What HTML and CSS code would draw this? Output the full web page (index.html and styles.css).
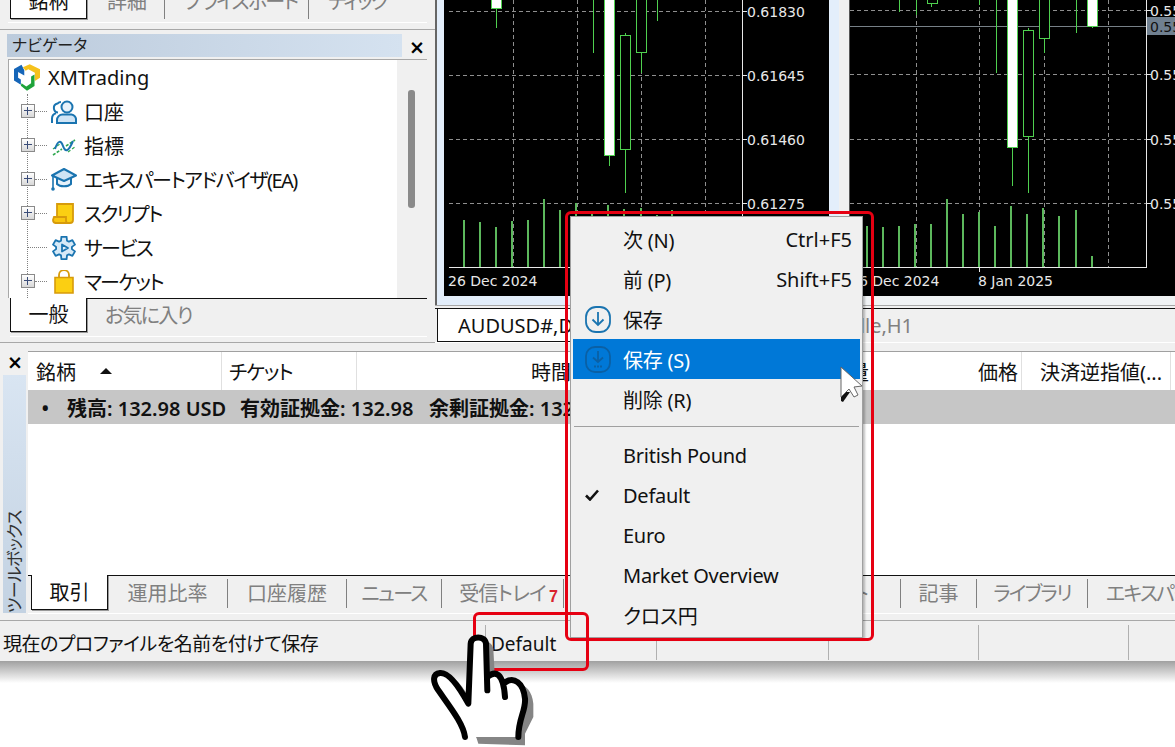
FILE: index.html
```html
<!DOCTYPE html>
<html lang="ja">
<head>
    <meta charset="UTF-8">
    <title>MetaTrader 5 - プロファイル</title>
    <link rel="stylesheet" href="styles.css">
</head>
<body>
    <div class="app">
        <div class="top">
            <!-- left column: market watch tabs + navigator -->
            <aside class="left-panel">
                <div class="watch-tabs">
                    <div class="watch-tab active">銘柄</div>
                    <div class="watch-tab details">詳細</div>
                    <div class="watch-tab board kana">プライスボード</div>
                    <div class="watch-tab ticks kana">ティック</div>
                </div>
                <div class="navigator">
                    <div class="nav-head">
                        <div class="nav-title">ナビゲータ</div>
                        <div class="close">×</div>
                    </div>
                    <div class="nav-body">
                        <div class="tree">
                            <div class="tree-root">
                                <svg class="logo" viewBox="0 0 76 78">
                                    <path d="M22 2 0 14V48L20 60V45L12 40V23L30 33V18z" fill="#1565b8"/>
                                    <path d="M26 9 46 0 76 15V40L61 49V25L42 15 34 19z" fill="#f6c21c"/>
                                    <path d="M20 63 38 78 60 64V30L50 36V56L36 65 22 56z" fill="#1ea33a"/>
                                </svg>
                                <span>XMTrading</span>
                            </div>
                            <ul class="tree-list">
                                <li class="tree-row">
                                    <i class="expander"></i><i class="dots"></i>
                                    <svg class="tree-icon" viewBox="0 0 26 24">
                                        <path d="M7 12.500A4.500 4.500 0 0 1 6.500 3.600 5 5 0 0 1 10 2M1 23v-4.500A5.500 5.500 0 0 1 5 13.300" fill="none" stroke="#1a74b0" stroke-width="2"/>
                                        <circle cx="16" cy="7" r="5.500" fill="#e6f1fa" stroke="#1a74b0" stroke-width="2"/>
                                        <path d="M6 23v-3a5.500 5.500 0 0 1 5.500-5.500h9A5 5 0 0 1 25 20v3z" fill="#cfe4f5" stroke="#1a74b0" stroke-width="2"/>
                                    </svg>
                                    <span>口座</span>
                                </li>
                                <li class="tree-row">
                                    <i class="expander"></i><i class="dots"></i>
                                    <svg class="tree-icon" viewBox="0 0 26 24">
                                        <path d="M2 21 11 15M15 12 24 6" fill="none" stroke="#2fa84f" stroke-width="1.600" stroke-dasharray="3 1.500"/>
                                        <path d="M2 15 9 10M17 18l7-5" fill="none" stroke="#2fa84f" stroke-width="1.200" stroke-dasharray="3 2"/>
                                        <path d="M4 15C7 6 10 6 12 12S17 19 22 7" fill="none" stroke="#1a74b0" stroke-width="2"/>
                                    </svg>
                                    <span>指標</span>
                                </li>
                                <li class="tree-row">
                                    <i class="expander"></i><i class="dots"></i>
                                    <svg class="tree-icon" viewBox="0 0 26 24">
                                        <path d="M6 9v7c3 3 11 3 14 0V9" fill="#e6f1fa" stroke="#1a74b0" stroke-width="2"/>
                                        <path d="M13 1 25 7.500 13 13 1 7.500z" fill="#cfe4f5" stroke="#1a74b0" stroke-width="2" stroke-linejoin="round"/>
                                        <path d="M2 8v12" stroke="#1a74b0" stroke-width="1.600"/>
                                        <circle cx="2" cy="21" r="1.800" fill="#1a74b0"/>
                                    </svg>
                                    <span class="kana-long">エキスパートアドバイザ(EA)</span>
                                </li>
                                <li class="tree-row">
                                    <i class="expander"></i><i class="dots"></i>
                                    <svg class="tree-icon" viewBox="0 0 26 24">
                                        <path d="M6 16V2h16v16c0 2-1 3-3 3H5z" fill="#fbcf12" stroke="#d79b0b" stroke-width="1.800"/>
                                        <path d="M3 15h12v3.500c0 1.500 1 2.500 2 2.500H5c-2 0-3-1-3-3z" fill="#f9c60f" stroke="#d79b0b" stroke-width="1.800"/>
                                    </svg>
                                    <span class="kana">スクリプト</span>
                                </li>
                                <li class="tree-row leaf">
                                    <i class="dots"></i>
                                    <svg class="tree-icon" viewBox="0 0 24 24">
                                        <path d="M9 4.600 9.400.8h5.200L15 4.600 16.900 5.700 20.400 4.200 23 8.600 19.900 10.900V13.100L23 15.400 20.400 19.800 16.900 18.300 15 19.400 14.600 23.200H9.400L9 19.400 7.100 18.300 3.600 19.800 1 15.400 4.100 13.100V10.900L1 8.600 3.600 4.200 7.100 5.700z" fill="#d6e9f7" stroke="#1a74b0" stroke-width="1.800" stroke-linejoin="round"/>
                                        <path d="M10 8.500 16 12 10 15.500z" fill="#e6f1fa" stroke="#1a74b0" stroke-width="1.800" stroke-linejoin="round"/>
                                    </svg>
                                    <span class="kana">サービス</span>
                                </li>
                                <li class="tree-row">
                                    <i class="expander"></i><i class="dots"></i>
                                    <svg class="tree-icon" viewBox="0 0 26 24">
                                        <path d="M8 8V5a5 5 0 0 1 10 0v3" fill="none" stroke="#d79b0b" stroke-width="1.800"/>
                                        <path d="M4 7.500h18v15.500H4z" fill="#fbcf12" stroke="#d79b0b" stroke-width="1.600"/>
                                    </svg>
                                    <span class="kana">マーケット</span>
                                </li>
                            </ul>
                        </div>
                        <div class="tree-scroll"><div class="thumb"></div></div>
                    </div>
                    <div class="nav-tabs">
                        <div class="watch-tab active">一般</div>
                        <div class="watch-tab kana">お気に入り</div>
                    </div>
                </div>
            </aside>

            <section class="workspace">
                <div class="charts">
                    <div class="chart-frame current">
                        <svg class="chart" width="385" height="296" viewBox="444 0 385 296">
                            <!-- grid -->
                            <path class="grid" d="M449 11.500H742M449 75.500H742M449 139.500H742M449 203.500H742M513.500 0V267M577.500 0V267M641.500 0V267M705.500 0V267"/>
                            <path class="axis" d="M448.500 267.500H742.500V0M742 11.500h5M742 75.500h5M742 139.500h5M742 203.500h5"/>
                            <!-- volume -->
                            <path class="vol" d="M464 267V220M480 267V222M496 267V227M512 267V221M528 267V220M544 267V199M560 267V210M576 267V203M592 267V212M608 267V205M624 267V209M641 267V208M657 267V215M672 267V210"/>
                            <!-- candles -->
                            <path class="wick" d="M496.500 8V28M593.500 0V53M609.500 155V166M625.500 33V193M641.500 52V73M657.500 0V21"/>
                            <rect class="up" x="491.500" y="-5" width="10" height="13.500"/>
                            <rect class="up" x="604.500" y="-5" width="10" height="160.500"/>
                            <rect class="down" x="620.500" y="35.500" width="10" height="114"/>
                            <rect class="down" x="636.500" y="-5" width="10" height="57.500"/>
                            <text class="price" x="747" y="17">0.61830</text>
                            <text class="price" x="747" y="81">0.61645</text>
                            <text class="price" x="747" y="145">0.61460</text>
                            <text class="price" x="747" y="209">0.61275</text>
                            <text class="price" x="448" y="286">26 Dec 2024</text>
                        </svg>
                    </div>
                    <div class="chart-frame other">
                        <svg class="chart" width="325" height="296" viewBox="850 0 325 296">
                            <path class="grid" d="M850 10.500H1146M850 74.500H1146M850 139.500H1146M850 203.500H1146M916.500 0V267M979.500 0V267M1044.500 0V267M1108.500 0V267"/>
                            <path class="level" d="M850 26.500H1146"/>
                            <path class="axis" d="M850 267.500H1146.500V0M1146 10.500h5M1146 74.500h5M1146 139.500h5M1146 203.500h5M979.500 267v5"/>
                            <path class="vol" d="M867 267V226M883 267V227M899 267V226M915 267V224M931 267V224M947 267V199M963 267V214M979 267V212M995 267V226M1011 267V206M1027 267V214M1043 267V208M1059 267V216M1076 267V210M1092 267V256"/>
                            <path class="wick" d="M899.500 0V12M916.500 0V15M931.500 3V7M979.500 0V5M996.500 0V73M1012.500 147V186M1028.500 28V193M1044.500 38V53M1076.500 0V33M1092.500 26V28"/>
                            <rect class="down" x="927.500" y="-5" width="10" height="8.500"/>
                            <rect class="up" x="1007.500" y="-5" width="10" height="152.500"/>
                            <rect class="down" x="1023.500" y="30.500" width="10" height="106"/>
                            <rect class="down" x="1039.500" y="-5" width="10" height="43.500"/>
                            <rect class="up" x="1087.500" y="-5" width="10" height="31.500"/>
                            <rect class="level-tag" x="1147" y="17" width="28" height="18"/>
                            <text class="price" x="1150" y="16">0.55</text>
                            <text class="level-text" x="1150" y="32">0.55</text>
                            <text class="price" x="1150" y="80">0.55</text>
                            <text class="price" x="1150" y="145">0.55</text>
                            <text class="price" x="1150" y="209">0.55</text>
                            <text class="price" x="850" y="286">26 Dec 2024</text>
                            <text class="price" x="978" y="286">8 Jan 2025</text>
                        </svg>
                    </div>
                </div>
                <div class="chart-tabs">
                    <div class="chart-tab active">AUDUSD#,Daily</div>
                    <div class="chart-tab">AUDUSD#,Candle,H1</div>
                </div>
            </section>
        </div>

        <section class="toolbox">
            <div class="toolbox-side">
                <div class="close">×</div>
                <div class="side-title">ツールボックス</div>
            </div>
            <div class="toolbox-main">
                <div class="table-head">
                    <div class="col first">銘柄<i class="sort"></i></div>
                    <div class="col"><span class="ticket">チケット</span></div>
                    <div class="col right">時間</div>
                    <div class="col right">タイプ</div>
                    <div class="col right">取引量</div>
                    <div class="col right">価格</div>
                    <div class="col stop">決済逆指値(...</div>
                    <div class="col"></div>
                </div>
                <div class="balance-row">
                    <span class="bullet">•</span>
                    <span class="bal-a">残高: 132.98 USD</span>
                    <span class="bal-b">有効証拠金: 132.98</span>
                    <span>余剰証拠金: 132.98</span>
                </div>
                <div class="table-empty"></div>
                <div class="toolbox-tabs">
                    <div class="tool-tab active">取引</div>
                    <div class="tool-tab w-ratio">運用比率</div>
                    <div class="tool-tab w-history">口座履歴</div>
                    <div class="tool-tab w-news kana">ニュース</div>
                    <div class="tool-tab w-mail">受信トレイ</div>
                    <div class="tool-tab w-cal kana">カレンダー</div>
                    <div class="tool-tab w-alert kana">アラート</div>
                    <div class="tool-tab w-article">記事</div>
                    <div class="tool-tab w-lib kana">ライブラリ</div>
                    <div class="tool-tab w-expert kana">エキスパート</div>
                </div>
            </div>
        </section>

        <footer class="status">
            <div class="cell cell-msg">現在のプロファイルを名前を付けて保存</div>
            <div class="cell cell-a">Default</div>
            <div class="cell cell-b"></div>
            <div class="cell cell-c"></div>
            <div class="cell cell-d"></div>
            <div class="cell"></div>
        </footer>
    </div>
    <div class="window-shadow"></div>

    <!-- context menu -->
    <div class="menu">
        <div class="menu-item"><span class="menu-icon"></span><span class="menu-label">次 (N)</span><span class="shortcut">Ctrl+F5</span></div>
        <div class="menu-item"><span class="menu-icon"></span><span class="menu-label">前 (P)</span><span class="shortcut">Shift+F5</span></div>
        <div class="menu-item">
            <span class="menu-icon">
                <svg width="26" height="27" viewBox="0 0 26 27"><rect x="1" y="1" width="24" height="25" rx="10" fill="none" stroke="#1a74b0" stroke-width="1.800"/><path d="M13 6v13M7.500 13.500 13 19l5.500-5.500" fill="none" stroke="#1a74b0" stroke-width="1.800"/></svg>
            </span>
            <span class="menu-label">保存</span>
        </div>
        <div class="menu-item selected">
            <span class="menu-icon">
                <svg width="26" height="27" viewBox="0 0 26 27"><rect x="1" y="1" width="24" height="25" rx="9" fill="none" stroke="#0a60a5" stroke-width="1.800"/><path d="M13 5v11M8 11.500 13 16l5-4.500" fill="none" stroke="#0a60a5" stroke-width="1.800"/><path d="M9 20.500h8" fill="none" stroke="#0a60a5" stroke-width="1.800" stroke-dasharray="2 1"/></svg>
            </span>
            <span class="menu-label">保存 (S)</span>
        </div>
        <div class="menu-item"><span class="menu-icon"></span><span class="menu-label">削除 (R)</span></div>
        <div class="menu-sep"></div>
        <div class="menu-item"><span class="menu-icon"></span><span class="menu-label">British Pound</span></div>
        <div class="menu-item">
            <span class="menu-icon">
                <svg width="14" height="12" viewBox="0 0 14 12"><path d="M1 6.500 5 10.500 13 1.500" fill="none" stroke="#111" stroke-width="2.600"/></svg>
            </span>
            <span class="menu-label">Default</span>
        </div>
        <div class="menu-item"><span class="menu-icon"></span><span class="menu-label">Euro</span></div>
        <div class="menu-item"><span class="menu-icon"></span><span class="menu-label">Market Overview</span></div>
        <div class="menu-item"><span class="menu-icon"></span><span class="menu-label kana">クロス円</span></div>
    </div>

    <!-- annotations drawn on top of the screenshot -->
    <div class="mark mark-menu"></div>
    <div class="mark mark-profile"></div>
    <div class="mark-num">7</div>

    <svg class="arrow-cursor" width="24" height="38" viewBox="0 0 24 38">
        <path d="M1 26H10L3 36 1 35z" fill="#111"/>
        <path d="M1 1V31L9 23 14 31 18 29 14 21 22 20z" fill="#fff" stroke="#666" stroke-width="1"/>
    </svg>

    <svg class="hand-cursor" width="110" height="125" viewBox="90 170 330 375">
        <path class="hand-shadow" d="M235 520C225 480 190 440 150 390 120 350 115 325 140 320 165 315 190 350 225 410L230 235C232 205 275 205 280 235L285 330C310 315 335 325 340 350 365 335 395 350 400 400V440L375 490V525z"/>
        <path class="hand-fill" d="M215 500C205 460 170 420 130 370 100 330 95 305 120 300 145 295 170 330 205 395L210 220C212 190 255 190 260 220L265 320C290 300 315 310 320 335 345 315 375 335 380 385 385 420 355 450 355 500z"/>
        <path class="hand-line" d="M195 500C190 460 150 410 115 360 95 330 100 310 120 308 145 305 175 345 205 400L212 220C214 195 255 195 258 220L262 360M262 320C285 300 310 305 315 380M318 335C340 320 370 335 375 385 378 420 355 445 355 500"/>
    </svg>
</body>
</html>
```
FILE: styles.css
```css
html, body {
    margin: 0;
    padding: 0;
}

body {
    position: relative;
    width: 1175px;
    height: 747px;
    overflow: hidden;
    background: #fff;
    color: #111;
    font-family: 'Noto Sans', 'Noto Sans CJK JP', sans-serif;
    font-size: 20px;
    font-feature-settings: "palt";
}

ul {
    list-style: none;
    margin: 0;
    padding: 0;
}

i {
    display: block;
}

/* Yu Gothic UI kana run much narrower than Noto */
.kana {
    letter-spacing: -1.700px;
}

.kana-long {
    letter-spacing: -1.500px;
}

.app {
    height: 661px;
    background: #f0f0f0;
    display: grid;
    grid-template-rows: 345px 275px 41px;
    overflow: hidden;
}

.window-shadow {
    height: 22px;
    background: linear-gradient(#a0a0a0, #fff);
}

.top {
    display: grid;
    grid-template-columns: 435px 740px;
    min-height: 0;
}

/* left column */
.left-panel {
    border-bottom: 1px solid #a8a8a8;
    height: 343px;
    box-sizing: border-box;
    overflow: hidden;
}

.watch-tabs {
    display: flex;
    height: 23px;
    margin: 0 8px;
    border-bottom: 1px solid #fff;
    padding-left: 2px;
    box-sizing: border-box;
    overflow: hidden;
}

.watch-tab {
    height: 34px;
    line-height: 34px;
    padding: 0 18px;
    color: #808080;
    white-space: nowrap;
    box-sizing: border-box;
}

.watch-tabs .watch-tab {
    margin-top: -15px;
    border-right: 1px solid #808080;
}

.watch-tabs .active {
    border: 1px solid #111;
    border-top: 0;
    box-shadow: 1px 1px 0 #999;
}

.watch-tab.active {
    width: 77px;
    padding: 0;
    background: #fff;
    color: #111;
    text-align: center;
}

.watch-tab.details {
    width: 78px;
    padding-left: 20px;
}

.watch-tab.board {
    width: 144px;
    padding-left: 19px;
}

.watch-tabs .ticks {
    border-right: 0;
    padding-left: 19px;
}

.navigator {
    margin-top: 6px;
    border-top: 1px solid #a8a8a8;
    padding: 4px 8px 0 7px;
}

.nav-head {
    display: flex;
    height: 23px;
    margin-bottom: 2px;
}

.nav-title {
    flex: none;
    width: 395px;
    padding-left: 5px;
    box-sizing: border-box;
    background: linear-gradient(90deg, #bccbdc, #d5e2f0);
    font-size: 16px;
    line-height: 22px;
    color: #222;
}

.close {
    flex: none;
    font-family: 'DejaVu Sans', sans-serif;
    font-weight: bold;
    font-size: 19px;
    line-height: 26px;
    text-align: center;
    width: 30px;
    color: #000;
}

.nav-body {
    display: flex;
    height: 238px;
    margin-left: 1px;
    border-top: 1px solid #a8a8a8;
    border-left: 1px solid #a8a8a8;
    overflow: hidden;
}

.tree {
    width: 388px;
    background: #fff;
}

.tree-root {
    display: flex;
    align-items: center;
    gap: 8px;
    height: 34px;
    padding-left: 5px;
}

.logo {
    width: 26px;
    height: 27px;
}

.tree-list {
    margin-left: 18px;
    border-left: 1px dotted #808080;
    padding-bottom: 10px;
}

.tree-row {
    display: flex;
    align-items: center;
    height: 34px;
}

.expander {
    position: relative;
    width: 14px;
    height: 14px;
    margin-left: -7px;
    box-sizing: border-box;
    border: 1px solid #8a8a8a;
    background: linear-gradient(#fff, #d8d8d8);
    flex: none;
}

.expander::before,
.expander::after {
    content: "";
    position: absolute;
    background: #3a4c78;
}

.expander::before {
    left: 2px;
    right: 2px;
    top: 5px;
    height: 1px;
}

.expander::after {
    top: 2px;
    bottom: 2px;
    left: 5px;
    width: 1px;
}

.dots {
    width: 12px;
    border-top: 1px dotted #808080;
    flex: none;
}

.leaf .dots {
    width: 19px;
}

.tree-icon {
    width: 26px;
    height: 24px;
    margin: 2px 7px 0 4px;
    flex: none;
}

.tree-scroll {
    flex: 1;
    padding: 30px 0 0 11px;
}

.thumb {
    width: 7px;
    height: 118px;
    border-radius: 3px;
    background: #8a8a8a;
}

.nav-tabs {
    display: flex;
    height: 39px;
    margin-left: 3px;
    border-bottom: 1px solid #fff;
    box-sizing: border-box;
    width: 417px;
}

.nav-tabs .watch-tab {
    flex: 1;
    border-top: 1px solid #111;
    padding-left: 18px;
}

.nav-tabs .active {
    flex: none;
    padding: 0;
    border: 1px solid #111;
    border-top: 0;
    box-shadow: 1px 1px 0 #999;
}

/* charts */
.workspace {
    display: flex;
    flex-direction: column;
    overflow: hidden;
    height: 343px;
}

.charts {
    display: flex;
    height: 306px;
    border-bottom: 1px solid #a8a8a8;
    box-sizing: border-box;
    flex: none;
}

.chart-frame {
    overflow: hidden;
}

.current {
    flex: none;
    width: 404px;
    padding: 0 10px 9px 7px;
    border-left: 2px solid #666;
    box-sizing: border-box;
    background: #e3eefb;
}

.other {
    margin-left: 10px;
    border-left: 1px solid #555;
    flex: 1;
    background: #f0f2f4;
}

.chart {
    display: block;
    background: #000;
}

.grid {
    fill: none;
    stroke: #8f8f8f;
    stroke-width: 1;
    stroke-dasharray: 4 3;
    shape-rendering: crispEdges;
}

.axis {
    fill: none;
    stroke: #e8e8e8;
    stroke-width: 1;
    shape-rendering: crispEdges;
}

.level {
    fill: none;
    stroke: #778087;
    stroke-width: 1;
}

.vol {
    fill: none;
    stroke: #5cb85c;
    stroke-width: 2;
    shape-rendering: crispEdges;
}

.wick {
    fill: none;
    stroke: #4fd04f;
    stroke-width: 1;
    shape-rendering: crispEdges;
}

.up {
    fill: #fff;
    stroke: #4fd04f;
    stroke-width: 1;
    shape-rendering: crispEdges;
}

.down {
    fill: #000;
    stroke: #4fd04f;
    stroke-width: 1;
    shape-rendering: crispEdges;
}

.price {
    fill: #e8e8e8;
    font-family: 'DejaVu Sans', sans-serif;
    font-size: 14px;
}

.level-tag {
    fill: #708090;
}

.level-text {
    fill: #111;
    font-family: 'DejaVu Sans', sans-serif;
    font-size: 14px;
}

.chart-tabs {
    display: flex;
    height: 35px;
    margin-top: 2px;
    border-top: 1px solid #111;
    border-bottom: 1px solid #fff;
    box-sizing: border-box;
}

.chart-tab {
    padding: 0 20px;
    line-height: 33px;
    white-space: nowrap;
    color: #808080;
}

.chart-tab.active {
    flex: none;
    width: 260px;
    height: 33px;
    color: #111;
    background: #fff;
    margin-left: 2px;
    border-left: 1px solid #111;
    border-bottom: 1px solid #111;
    box-sizing: border-box;
}

/* toolbox */
.toolbox {
    display: flex;
    min-height: 0;
}

.toolbox-side {
    width: 28px;
    padding-left: 3px;
    box-sizing: border-box;
    flex: none;
}

.toolbox-side .close {
    width: 24px;
    margin-top: 4px;
    height: 26px;
}

.side-title {
    height: 238px;
    width: 23px;
    background: linear-gradient(0deg, #d9e5f2, #c3d2e2);
    writing-mode: vertical-rl;
    text-orientation: sideways;
    transform: rotate(180deg);
    font-size: 17px;
    letter-spacing: -0.800px;
    line-height: 23px;
    color: #333;
    box-sizing: border-box;
}

.toolbox-main {
    flex: 1;
    min-width: 0;
    margin-top: 6px;
    border-top: 1px solid #a0a0a0;
    display: flex;
    flex-direction: column;
    overflow: hidden;
}

.table-head {
    display: grid;
    grid-template-columns: 194px 135px 218px 125px 173px 149px 149px 1fr;
    height: 38px;
    background: #fff;
}

.col {
    display: flex;
    align-items: center;
    padding: 0 7px;
    border-right: 1px solid #e0e0e0;
    white-space: nowrap;
    box-sizing: border-box;
    overflow: hidden;
}

.col.first {
    padding-left: 8px;
}

.col.right {
    justify-content: flex-end;
    padding-right: 3px;
}

.col.stop {
    padding-left: 18px;
    padding-right: 0;
}

.ticket {
    letter-spacing: -1.200px;
}

.sort {
    width: 0;
    height: 0;
    margin-left: 24px;
    border-left: 6px solid transparent;
    border-right: 6px solid transparent;
    border-bottom: 6px solid #111;
}

.balance-row {
    display: flex;
    align-items: center;
    height: 34px;
    background: #c6c6c6;
    font-weight: 600;
    white-space: nowrap;
}

.bullet {
    width: 21px;
    text-align: right;
    margin-right: 18px;
}

.bal-a {
    width: 173px;
}

.bal-b {
    width: 189px;
}

.table-empty {
    flex: 1;
    background: #fff;
}

.toolbox-tabs {
    display: flex;
    height: 45px;
    flex: none;
    padding-left: 3px;
    border-top: 1px solid #111;
    box-sizing: border-box;
    background: linear-gradient(#f0f0f0 37px, #fff 37px, #fff 38px, #f0f0f0 38px);
}

.tool-tab {
    height: 29px;
    margin-top: 3px;
    line-height: 29px;
    text-align: center;
    color: #808080;
    border-right: 1px solid #808080;
    box-sizing: border-box;
    white-space: nowrap;
    flex: none;
}

.tool-tab.active {
    width: 77px;
    height: 35px;
    margin-top: -1px;
    line-height: 36px;
    background: #fff;
    color: #111;
    border: 1px solid #111;
    border-top: 0;
    box-shadow: 1px 1px 0 #999;
}

.w-ratio { width: 120px; }
.w-history { width: 119px; }
.w-news { width: 95px; }
.w-mail { width: 122px; letter-spacing: -0.800px; }
.w-cal { width: 221px; }
.w-alert { width: 116px; text-align: left; padding-left: 18px; }
.w-article { width: 76px; }
.w-lib { width: 111px; }
.w-expert { width: 120px; border-right: 0; text-align: left; padding-left: 18px; }

/* status bar */
.status {
    display: flex;
    align-items: stretch;
    border-top: 1px solid #a8a8a8;
    padding: 4px 0 1px;
    box-sizing: border-box;
}

.cell {
    line-height: 38px;
    border-right: 1px solid #b0b0b0;
    padding-left: 3px;
    box-sizing: border-box;
    font-size: 19px;
    letter-spacing: -0.500px;
    white-space: nowrap;
}

.cell:last-child {
    flex: 1;
    border-right: 0;
}

.cell-msg { width: 486px; }
.cell-a { width: 171px; padding-left: 5px; letter-spacing: 0; }
.cell-b { width: 172px; }
.cell-c { width: 150px; }
.cell-d { width: 150px; }

/* context menu */
.menu {
    position: absolute;
    left: 570px;
    top: 216px;
    width: 293px;
    height: 422px;
    padding: 2px 2px;
    box-sizing: border-box;
    background: #f0f0f0;
    border: 1px solid #a0a0a0;
    box-shadow: 2px 2px 2px rgba(0, 0, 0, 0.25);
}

.menu-item {
    display: flex;
    align-items: center;
    height: 40px;
    padding-right: 8px;
    white-space: nowrap;
}

.menu-item.selected {
    background: #0078d7;
    color: #fff;
}

.menu-icon {
    width: 50px;
    padding-left: 12px;
    box-sizing: border-box;
    display: flex;
    align-items: center;
    flex: none;
}

.menu-label {
    flex: 1;
    letter-spacing: -0.250px;
}

.menu-sep {
    height: 16px;
    margin: 0 1px;
}

.menu-sep::before {
    content: "";
    display: block;
    height: 1px;
    background: #a0a0a0;
    transform: translateY(7px);
}

/* annotations */
.mark {
    position: absolute;
    box-sizing: border-box;
    border: 3px solid #e60012;
    border-radius: 6px;
}

.mark-menu {
    left: 565px;
    top: 211px;
    width: 309px;
    height: 430px;
}

.mark-profile {
    left: 473px;
    top: 612px;
    width: 116px;
    height: 59px;
}

.mark-num {
    position: absolute;
    left: 549px;
    top: 588px;
    color: #d9232e;
    font-family: 'Liberation Sans', sans-serif;
    font-weight: bold;
    font-size: 16px;
}

.arrow-cursor {
    position: absolute;
    left: 840px;
    top: 366px;
}

.hand-cursor {
    position: absolute;
    left: 430px;
    top: 627px;
}

.hand-shadow {
    fill: #858585;
}

.hand-fill {
    fill: #fff;
}

.hand-line {
    fill: none;
    stroke: #000;
    stroke-width: 18;
    stroke-linejoin: round;
    stroke-linecap: round;
}
```
